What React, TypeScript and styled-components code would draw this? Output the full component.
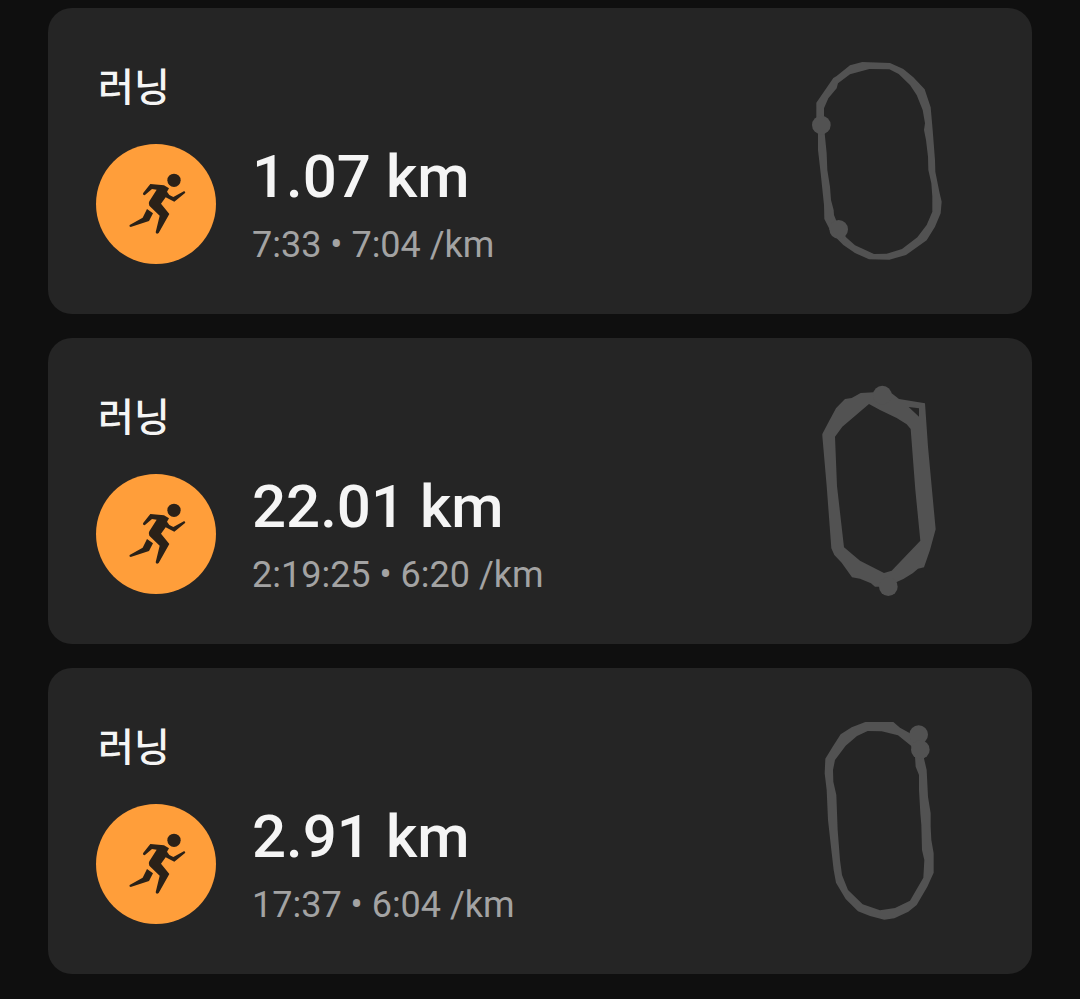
import React from "react";
import styled, { createGlobalStyle } from "styled-components";

const GlobalStyle = createGlobalStyle`
  *, *::before, *::after { box-sizing: border-box; }
  html { background: #0f0f0f; }
  body {
    margin: 0;
    background: #0f0f0f;
    color: #f5f5f5;
    font-family: Roboto, "Noto Sans CJK KR", sans-serif;
  }
`;

const List = styled.ul`
  list-style: none;
  margin: 0;
  padding: 8px 48px 24px;
  display: flex;
  flex-direction: column;
  gap: 24px;
`;

const Card = styled.li`
  display: flex;
  justify-content: space-between;
  align-items: flex-start;
  padding: 42px 72px 44px 48px;
  border-radius: 24px;
  background: #252525;
`;

const Summary = styled.div`
  display: flex;
  flex-direction: column;
  gap: 26px;
  padding: 8px 0 6px;
`;

const Title = styled.h2`
  margin: 0;
  padding: 0 0 0 2px;
  font-size: 39px;
  line-height: 60px;
  font-weight: 500;
`;

const Activity = styled.div`
  display: flex;
  align-items: center;
  gap: 36px;
`;

const Badge = styled.div`
  display: flex;
  flex: none;
  width: 120px;
  height: 120px;
  border-radius: 50%;
  background: #ff9e3a;
`;

const Stats = styled.div`
  display: flex;
  flex-direction: column;
  gap: 16px;
`;

const Distance = styled.p`
  margin: 0;
  font-size: 60px;
  line-height: 66px;
  font-weight: 500;
`;

const Detail = styled.p`
  margin: 0;
  font-size: 36px;
  line-height: 38px;
  color: #a3a3a3;
`;

const Route = styled.svg`
  flex: none;
  width: 160px;
  height: 220px;
  fill: #525252;
  fill-rule: evenodd;
`;

function Runner() {
  return (
    <svg width="120" height="120" viewBox="18 27 360 360" fill="#2a2118" aria-hidden="true">
      <circle cx="252" cy="136" r="20" />
      <path d="M181 147L222 151L237 160L231 170L238 180L250 186L283 168L286 173L253 200L227 187L213 206L238 237L206 294Q199 299 197 292L209 242L178 212Q174 206 178 199L200 164L186 162L164 181Q158 181 159 175Z" />
      <path d="M171 222L189 235L177 258L122 276Q116 274 119 270L158 248Z" />
    </svg>
  );
}

type Track = { shape: string; points: [number, number][] };
type Run = { distance: string; detail: string; track: Track };

const runs: Run[] = [
  {
    distance: "1.07 km",
    detail: "7:33 • 7:04 /km",
    track: {
      shape:
        "M150 46L187 36L270 39L310 57L340 82L374 118L392 172L398 240L405 330L406 365L418 425L425 455L422 490L405 530L380 571L318 615L268 629L207 628L165 609L130 585L107 562L90 540L73 507L72 465L62 370L54 300L54 250L49 200L49 158L100 84L110 78Z" +
        "M208 57L268 58L296 72L330 105L350 135L368 180L375 220L372 240L378 270L384 320L385 360L394 400L397 440L397 485L380 525L352 562L306 597L260 611L222 612L165 586L138 562L108 510L102 495L101 480L93 450L90 410L82 360L80 310L74 250L72 200L72 175L85 145L110 115L114 100L150 73Z",
      points: [[64, 225], [116, 538]],
    },
  },
  {
    distance: "22.01 km",
    detail: "2:19:25 • 6:20 /km",
    track: {
      shape:
        "M182 39L222 37L275 40L297 57L375 70L384 200L396 330L407 448L390 510L372 562L354 566L338 580L310 597L290 606L265 620L225 620L213 610L180 596L156 592L125 548L103 525L94 505L80 318L67 168L67 162L87 124L108 85L118 74L135 57L155 54Z" +
        "M207 72L240 90L290 114L320 133L332 147L346 330L361 482L275 572L252 579L180 542L132 502L111 318L105 170L127 140Z" +
        "M326 81L357 85L357 110Z",
      points: [[247, 45], [265, 620]],
    },
  },
  {
    distance: "2.91 km",
    detail: "17:37 • 6:04 /km",
    track: {
      shape:
        "M196 36L280 36L300 53L330 70L365 110L373 150L380 180L384 260L392 310L392 350L394 390L401 430L401 488L382 530L350 585L325 605L283 625L253 629L210 618L174 604L137 567L108 518L101 480L94 420L84 330L80 240L74 190L76 146L98 110L122 73L155 52Z" +
        "M203 63L245 64L294 76L333 107L345 140L347 170L357 195L357 240L361 310L364 345L366 420L373 450L370 503L330 572L285 594L240 601L188 583L144 540L126 495L120 450L113 360L109 255L100 215L99 180L105 150L137 107L171 78Z",
      points: [[356, 74], [361, 119]],
    },
  },
];

export default function App() {
  return (
    <>
      <GlobalStyle />
      <main>
        <List>
          {runs.map((run) => (
            <Card key={run.distance}>
              <Summary>
                <Title lang="ko">러닝</Title>
                <Activity>
                  <Badge>
                    <Runner />
                  </Badge>
                  <Stats>
                    <Distance>{run.distance}</Distance>
                    <Detail>{run.detail}</Detail>
                  </Stats>
                </Activity>
              </Summary>
              <Route viewBox="0 0 480 660" aria-hidden="true">
                <path d={run.track.shape} />
                {run.track.points.map(([x, y]) => (
                  <circle key={y} cx={x} cy={y} r="28" />
                ))}
              </Route>
            </Card>
          ))}
        </List>
      </main>
    </>
  );
}
